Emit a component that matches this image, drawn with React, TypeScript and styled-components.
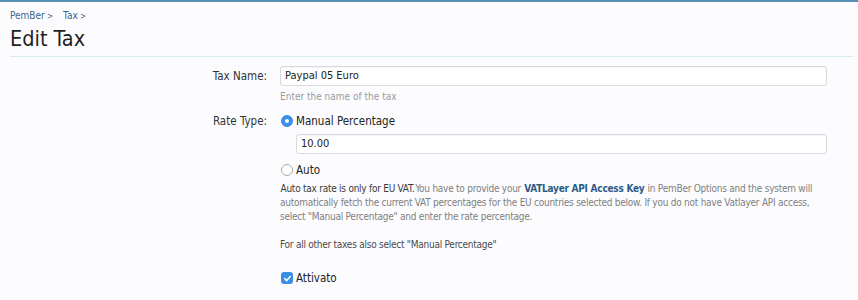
import React from "react";
import styled, { createGlobalStyle } from "styled-components";

const Global = createGlobalStyle`
  html, body { margin: 0; padding: 0; background: #fcfcff; }
  body { font-family: "DejaVu Sans Condensed", "DejaVu Sans", Tahoma, sans-serif; color: #333; }
  * { box-sizing: border-box; }
`;

const Page = styled.div`
  border-top: 2px solid #5a8db3;
  padding: 8px 5px 0 10px;
  min-height: 300px;
`;

const Crumbs = styled.div`
  display: flex;
  gap: 10px;
  font-size: 10px;
  line-height: 12px;
  color: #3d6485;
`;

const Crumb = styled.span`
  &::after { content: " >"; font-size: 8px; color: #3d6485; }
`;

const Title = styled.h1`
  margin: 3px 0 0;
  font-size: 21.5px;
  line-height: 26px;
  font-weight: normal;
  color: #1f1f1f;
`;

const Divider = styled.div`
  margin-top: 4px;
  border-top: 1px solid #dbe9f0;
`;

const Form = styled.div`
  display: grid;
  grid-template-columns: 257px 547px;
  column-gap: 13px;
  padding-top: 9px;
`;

const Label = styled.div<{ $top?: number }>`
  text-align: right;
  font-size: 11.5px;
  line-height: 14px;
  color: #333;
  padding-top: ${(p) => p.$top ?? 0}px;
`;

const Control = styled.div`
  display: flex;
  flex-direction: column;
`;

const TextInput = styled.div<{ $indent?: number; $mt?: number }>`
  height: 20px;
  margin-left: ${(p) => p.$indent ?? 0}px;
  margin-top: ${(p) => p.$mt ?? 0}px;
  border: 1px solid #d9d9dd;
  border-radius: 3px;
  background: #fff;
  box-shadow: inset 0 1px 1px rgba(0, 0, 0, 0.04);
  font-size: 11px;
  line-height: 18px;
  padding-left: 4px;
  color: #222;
`;

const Hint = styled.div`
  font-size: 10px;
  line-height: 12px;
  color: #9a9a9a;
  margin-top: 5px;
  margin-bottom: 11px;
`;

const Option = styled.div<{ $mt?: number }>`
  display: flex;
  align-items: center;
  gap: 3px;
  height: 14px;
  margin-top: ${(p) => p.$mt ?? 0}px;
  font-size: 11.5px;
  color: #222;
`;

const Radio = styled.span<{ $on?: boolean }>`
  width: 12px;
  height: 12px;
  border-radius: 50%;
  flex: none;
  margin-left: 1px;
  background: ${(p) => (p.$on ? "#3a8ee6" : "#fff")};
  border: 1px solid ${(p) => (p.$on ? "#3a8ee6" : "#aaa")};
  display: flex;
  align-items: center;
  justify-content: center;
  &::after {
    content: "";
    display: ${(p) => (p.$on ? "block" : "none")};
    width: 4px;
    height: 4px;
    border-radius: 50%;
    background: #fff;
  }
`;

const Check = styled.span`
  width: 12px;
  height: 12px;
  border-radius: 3px;
  flex: none;
  margin-left: 1px;
  background: #3a8ee6;
  display: flex;
  align-items: center;
  justify-content: center;
`;

const Explain = styled.div`
  margin-top: 5px;
  font-size: 10px;
  line-height: 14px;
  letter-spacing: -0.25px;
  color: #808080;
`;

const Strong = styled.span<{ $blue?: boolean }>`
  color: ${(p) => (p.$blue ? "#2c5a86" : "#3a3a3a")};
  font-weight: ${(p) => (p.$blue ? "bold" : "normal")};
  line-height: 14px;
  padding: 0 0.5px;
`;

const Para = styled.p<{ $dark?: boolean }>`
  margin: 0 0 14px;
  line-height: 14px;
  color: ${(p) => (p.$dark ? "#4a4a4a" : "inherit")};
`;

export default function App() {
  return (
    <>
      <Global />
      <Page>
        <Crumbs>
          <Crumb>PemBer</Crumb>
          <Crumb>Tax</Crumb>
        </Crumbs>
        <Title>Edit Tax</Title>
        <Divider />
        <Form>
          <Label $top={3}>Tax Name:</Label>
          <Control>
            <TextInput>Paypal 05 Euro</TextInput>
            <Hint>Enter the name of the tax</Hint>
          </Control>
          <Label>Rate Type:</Label>
          <Control>
            <Option>
              <Radio $on />
              Manual Percentage
            </Option>
            <TextInput $indent={16} $mt={6}>10.00</TextInput>
            <Option $mt={9}>
              <Radio />
              Auto
            </Option>
            <Explain>
              <Para>
                <Strong>Auto tax rate is only for EU VAT.</Strong>You have to provide your{" "}
                <Strong $blue>VATLayer API Access Key</Strong> in PemBer Options and the system will
                automatically fetch the current VAT percentages for the EU countries selected below. If
                you do not have Vatlayer API access, select "Manual Percentage" and enter the rate
                percentage.
              </Para>
              <Para $dark>For all other taxes also select "Manual Percentage"</Para>
            </Explain>
            <Option $mt={5}>
              <Check>
                <svg width="9" height="9" viewBox="0 0 10 10">
                  <path d="M2 5.2 L4.2 7.3 L8 2.8" fill="none" stroke="#fff" strokeWidth="1.8" strokeLinecap="round" strokeLinejoin="round" />
                </svg>
              </Check>
              Attivato
            </Option>
          </Control>
        </Form>
      </Page>
    </>
  );
}
